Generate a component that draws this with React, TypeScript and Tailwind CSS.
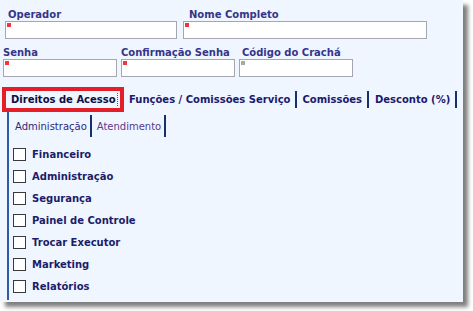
import React from "react";

const font = { fontFamily: "'DejaVu Sans', Verdana, sans-serif" };

function Field({
  label,
  width,
  labelPad,
  marker,
}: {
  label: string;
  width: string;
  labelPad: string;
  marker: "red" | "gray";
}) {
  return (
    <div className={`flex flex-col ${width}`}>
      <div className={`h-[13px] text-[10px] leading-[13px] font-bold text-[#35358a] whitespace-nowrap ${labelPad}`}>
        {label}
      </div>
      <div className="relative h-[18px] border border-[#a6a6ae] bg-white">
        <div
          className={`absolute left-[1px] top-[1px] h-[4px] w-[4px] ${
            marker === "red" ? "bg-[#f0363c]" : "bg-[#a8a8a8]"
          }`}
        />
      </div>
    </div>
  );
}

export default function App() {
  const items = [
    "Financeiro",
    "Administração",
    "Segurança",
    "Painel de Controle",
    "Trocar Executor",
    "Marketing",
    "Relatórios",
  ];
  return (
    <div className="w-[473px] h-[311px] bg-white overflow-hidden" style={font}>
      <div className="w-[463px] h-[302px] bg-[#eff6ff] shadow-[5px_5px_4px_rgba(0,0,0,0.5)] flex flex-col">
        {/* row 1 */}
        <div className="flex pt-[8px] pl-[5px] gap-[6px]">
          <Field label="Operador" width="w-[172px]" labelPad="pl-[3px]" marker="red" />
          <Field label="Nome Completo" width="w-[244px]" labelPad="pl-[6px]" marker="red" />
        </div>
        {/* row 2 */}
        <div className="flex mt-[7px] pl-[3px] gap-[4px]">
          <Field label="Senha" width="w-[114px]" labelPad="pl-0" marker="red" />
          <Field label="Confirmação Senha" width="w-[114px]" labelPad="pl-0" marker="red" />
          <Field label="Código do Crachá" width="w-[114px]" labelPad="pl-[3px]" marker="gray" />
        </div>
        {/* tabs */}
        <div className="flex items-center mt-[10px] ml-[2px] h-[25px] text-[10px] font-bold text-[#1a1a6e] whitespace-nowrap">
          <div className="h-[25px] w-[122px] border-[4px] border-[#e31e26] flex items-center pl-[5px] text-[#0d0d45]">
            <span className="border-r border-dotted border-[#555] pr-[1px] leading-[13px]">Direitos de Acesso</span>
          </div>
          <div className="h-[17px] flex items-center pl-[5px] pr-[5px] border-r-2 border-[#16306e]">
            Funções / Comissões Serviço
          </div>
          <div className="h-[17px] flex items-center pl-[5px] pr-[5px] border-r-2 border-[#16306e]">
            Comissões
          </div>
          <div className="h-[17px] flex items-center pl-[6px] pr-[5px] border-r-2 border-[#16306e]">
            Desconto (%)
          </div>
        </div>
        {/* content */}
        <div className="ml-[7px] flex-1 mb-[2px] border-l-2 border-[#2f5ba6] flex flex-col">
          <div className="flex mt-[3px] h-[22px] text-[10px] whitespace-nowrap">
            <div className="flex items-center pl-[6px] pr-[3px] border-r-2 border-[#16306e] text-[#2a2a7a]">
              Administração
            </div>
            <div className="flex items-center pl-[5px] pr-[3px] border-r-2 border-[#16306e] text-[#5a3a8c]">
              Atendimento
            </div>
          </div>
          <div className="flex flex-col gap-[9px] mt-[11px] pl-[4px]">
            {items.map((t) => (
              <div key={t} className="flex items-center h-[13px]">
                <div className="w-[13px] h-[13px] border border-[#3a3a3a] bg-white shrink-0" />
                <span className="ml-[6px] text-[10px] font-bold text-[#1c1c6a] leading-[13px] whitespace-nowrap">
                  {t}
                </span>
              </div>
            ))}
          </div>
        </div>
      </div>
    </div>
  );
}
